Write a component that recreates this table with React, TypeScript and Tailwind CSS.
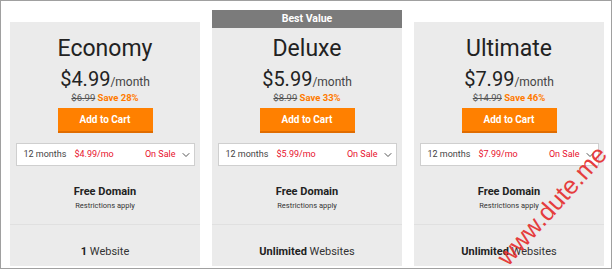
import { ChevronDown } from 'lucide-react';

type Plan = {
  name: string;
  price: string;
  was: string;
  save: string;
  mo: string;
  sites: string;
  rest: string;
  best?: boolean;
};

const plans: Plan[] = [
  { name: 'Economy', price: '$4.99', was: '$6.99', save: 'Save 28%', mo: '$4.99/mo', sites: '1', rest: 'Website' },
  { name: 'Deluxe', price: '$5.99', was: '$8.99', save: 'Save 33%', mo: '$5.99/mo', sites: 'Unlimited', rest: 'Websites', best: true },
  { name: 'Ultimate', price: '$7.99', was: '$14.99', save: 'Save 46%', mo: '$7.99/mo', sites: 'Unlimited', rest: 'Websites' },
];

function PlanCard({ plan }: { plan: Plan }) {
  return (
    <div className={plan.best ? 'w-[190px] flex flex-col' : 'w-[190px] flex flex-col pt-[12px]'}>
      {plan.best && (
        <div className="h-[18px] bg-[#7b7b7b] text-white text-[10.5px] font-bold leading-[18px] text-center">
          Best Value
        </div>
      )}
      <div className={plan.best ? 'flex-1 bg-[#ebebeb] flex flex-col items-center pt-[6px]' : 'flex-1 bg-[#ebebeb] flex flex-col items-center pt-[12px]'}>
        <div className="h-[30px] text-[23px] leading-[30px] text-[#222]">{plan.name}</div>
        <div className="mt-[3px] h-[24px] flex items-baseline leading-[24px] text-[#222]">
          <span className="text-[20px]">{plan.price}</span>
          <span className="text-[12px] text-[#444]">/month</span>
        </div>
        <div className="h-[14px] text-[9.5px] leading-[14px]">
          <span className="line-through text-[#555]">{plan.was}</span>{' '}
          <span className="font-bold text-[#ff7a00]">{plan.save}</span>
        </div>
        <button className="mt-[3px] w-[95px] h-[25px] bg-[#ff8000] border-b-2 border-[#e06c00] text-white text-[10px] font-bold">
          Add to Cart
        </button>
        <div className="mt-[10px] w-[179px] h-[23px] bg-white border border-[#cfcfcf] flex items-center pl-[7px] pr-[2px] text-[9px]">
          <span className="text-[#444]">12 months</span>
          <span className="ml-[8px] text-[#e8112d]">{plan.mo}</span>
          <span className="ml-auto text-[#e8112d]">On Sale</span>
          <ChevronDown className="ml-[4px] w-[12px] h-[12px] text-[#555]" strokeWidth={2} />
        </div>
        <div className="mt-[18px] text-[11px] font-bold text-[#222] leading-[16px]">Free Domain</div>
        <div className="text-[7.5px] text-[#333] leading-[11px]">Restrictions apply</div>
        <div className="mt-[13px] w-full border-t border-[#e0e0e0]" />
        <div className="mt-[19px] text-[11px] text-[#333] leading-[16px]">
          <span className="font-bold text-[#222]">{plan.sites}</span> {plan.rest}
        </div>
      </div>
    </div>
  );
}

export default function App() {
  return (
    <div
      className="relative w-[612px] h-[269px] bg-white border border-[#a0a0a0] overflow-hidden"
      style={{ fontFamily: 'Roboto, "Liberation Sans", sans-serif' }}
    >
      <div className="flex h-full pt-[9px] pl-[9px] gap-[12px] pb-[2px]">
        {plans.map((p) => (
          <PlanCard key={p.name} plan={p} />
        ))}
      </div>
      <div className="absolute left-[476px] top-[186px] -rotate-[48deg] text-[25px] text-[#e52b2b] opacity-90 pointer-events-none whitespace-nowrap font-['Liberation_Sans',sans-serif]">
        www.dute.me
      </div>
    </div>
  );
}
